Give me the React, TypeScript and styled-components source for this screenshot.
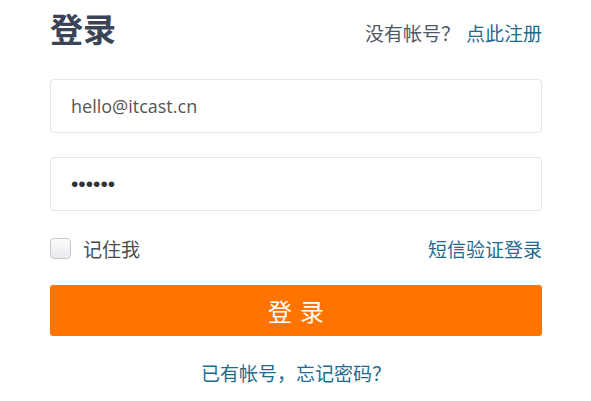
import styled, { createGlobalStyle } from 'styled-components';

const GlobalStyle = createGlobalStyle`
    html, body {
        margin: 0;
        padding: 0;
        background: #ffffff;
    }
    body {
        font-family: "Open Sans", "Noto Sans CJK SC", sans-serif;
    }
`;

const Page = styled.div`
    width: 492px;
    padding: 0 49px 0 50px;
    display: flex;
    flex-direction: column;
`;

const Header = styled.div`
    display: flex;
    justify-content: space-between;
    align-items: flex-end;
    height: 50px;
`;

const Title = styled.h1`
    margin: 0;
    font-family: "Noto Sans CJK SC", sans-serif;
    font-size: 33px;
    font-weight: 700;
    line-height: 44px;
    color: #3a4456;
`;

const Hint = styled.div`
    font-family: "Noto Sans CJK SC", sans-serif;
    font-size: 19px;
    line-height: 24px;
    color: #4f5866;
    padding-bottom: 5px;
`;

const Link = styled.a<{ $gap?: number }>`
    color: #1f6b8e;
    text-decoration: none;
    margin-left: ${(p) => p.$gap ?? 0}px;
    cursor: pointer;
`;

const Field = styled.input<{ $top: number }>`
    box-sizing: border-box;
    width: 100%;
    height: 54px;
    margin-top: ${(p) => p.$top}px;
    padding: 0 20px;
    border: 1px solid #e3e5ea;
    border-radius: 4px;
    font-family: "Open Sans", "Noto Sans CJK SC", sans-serif;
    font-size: 18px;
    color: #555;
    outline: none;
    background: #fff;

    &[type="password"] {
        font-family: "Liberation Sans", sans-serif;
        font-size: 21px;
        letter-spacing: 0;
        color: #333;
    }
`;

const OptionsRow = styled.div`
    display: flex;
    justify-content: space-between;
    align-items: center;
    margin-top: 24px;
    height: 26px;
    font-family: "Noto Sans CJK SC", sans-serif;
    font-size: 19px;
`;

const Remember = styled.label`
    display: flex;
    align-items: center;
    gap: 12px;
    color: #4c4c4c;
`;

const CheckBox = styled.span`
    box-sizing: border-box;
    width: 21px;
    height: 21px;
    border: 1px solid #c6c9cf;
    border-radius: 4px;
    background: linear-gradient(#fbfbfc, #e9eaee);
`;

const SubmitButton = styled.button`
    margin-top: 24px;
    height: 51px;
    width: 100%;
    border: none;
    border-radius: 3px;
    background: #ff7300;
    color: #fff;
    font-family: "Noto Sans CJK SC", sans-serif;
    font-size: 24px;
    letter-spacing: 8px;
    text-indent: 8px;
    cursor: pointer;
`;

const Footer = styled.div`
    margin-top: 23px;
    text-align: center;
    font-family: "Noto Sans CJK SC", sans-serif;
    font-size: 19px;
    line-height: 28px;
`;

export default function App() {
    return (
        <>
            <GlobalStyle />
            <Page>
                <Header>
                    <Title>登录</Title>
                    <Hint>
                        没有帐号？<Link $gap={6}>点此注册</Link>
                    </Hint>
                </Header>
                <Field $top={29} type="text" defaultValue="hello@itcast.cn" readOnly />
                <Field $top={24} type="password" defaultValue="123456" readOnly />
                <OptionsRow>
                    <Remember>
                        <CheckBox />
                        记住我
                    </Remember>
                    <Link>短信验证登录</Link>
                </OptionsRow>
                <SubmitButton>登录</SubmitButton>
                <Footer>
                    <Link>已有帐号，忘记密码？</Link>
                </Footer>
            </Page>
        </>
    );
}
